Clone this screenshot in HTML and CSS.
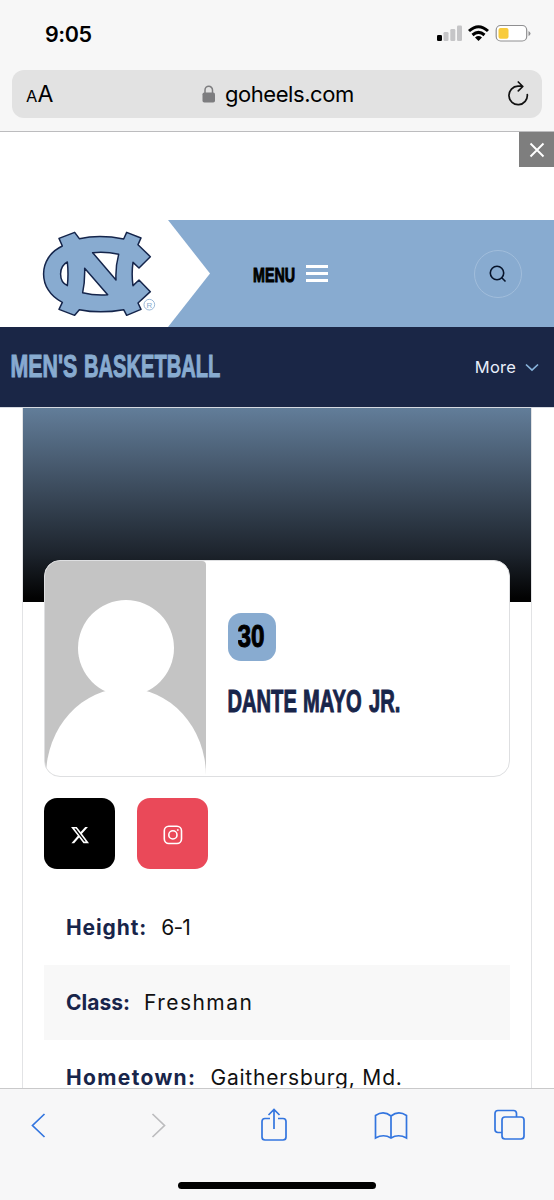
FILE: index.html
```html
<!DOCTYPE html>
<html lang="en">
<head>
<meta charset="utf-8">
<title>Dante Mayo Jr. - Men's Basketball</title>
<link rel="stylesheet" href="styles.css">
</head>
<body>
<div class="phone">
  <header class="browser-top">
    <div class="status">
      <span class="time">9:05</span>
      <svg class="status-icons" width="98" height="24" viewBox="0 0 98 24">
        <rect x="1" y="13" width="5" height="6" rx="1.3" fill="#000"/>
        <rect x="7.5" y="10" width="5" height="9" rx="1.3" fill="#c5c5c7"/>
        <rect x="14.3" y="7" width="5" height="12" rx="1.3" fill="#c5c5c7"/>
        <rect x="21" y="3.5" width="5" height="15.500" rx="1.3" fill="#c5c5c7"/>
        <g fill="none" stroke="#000" stroke-width="3"><path d="M33 9Q42.500.5 52 9"/><path d="M36.500 13Q42.500 7.800 48.500 13"/></g>
        <path d="M39 15.500Q42.500 12.700 46 15.500L42.500 19Z"/>
        <rect x="60.200" y="3.500" width="30.500" height="15.500" rx="4.500" fill="#fff" stroke="#8f8f91" stroke-width="1.200"/>
        <rect x="62.500" y="6" width="10" height="10.700" rx="2" fill="#f8cb3c"/>
        <path d="M92.500 9v5q2-1 2-2.500T92.500 9Z" fill="#8f8f91"/>
      </svg>
    </div>
    <div class="address">
      <span class="text-size"><small>A</small>A</span>
      <span class="domain">
        <svg width="14" height="18" viewBox="0 0 14 18"><rect x=".5" y="7.500" width="12.500" height="10" rx="1.800" fill="#7d7d7f"/><path d="M3 8V5a3.750 3.750 0 0 1 7.500 0v3" fill="none" stroke="#7d7d7f" stroke-width="1.500"/></svg>
        <span class="domain-name">goheels.com</span>
      </span>
      <svg class="reload" width="24" height="26" viewBox="0 0 24 26" fill="none" stroke="#111" stroke-width="1.700" stroke-linecap="round" stroke-linejoin="round"><path d="M21.300 13.500A9.200 9.200 0 1 1 12 5.200h4.500M12.300 1l4.500 4.500-4.500 4.300"/></svg>
    </div>
  </header>

  <main class="page">
    <div class="ad-space"><button class="close"><svg width="16" height="16" viewBox="0 0 16 16"><path d="M1.500 1.500l13 13M14.500 1.500l-13 13" stroke="#fff" stroke-width="1.900"/></svg></button></div>
    <nav class="site-nav">
      <div class="brand">
        <svg width="210" height="107" viewBox="-90 15 630 321">
          <path fill="#88abd0" fill-rule="evenodd" stroke="#15254b" stroke-width="4.500" stroke-linejoin="round" d="M87 70L134 52L148 71Q210 58 281 72L290 52L333 69L324 89L361 125L327 159L309 142Q304 177 309 212L327 195L361 230L324 264L333 283L290 301L281 284Q210 297 148 284L134 301L87 283L97 262C22 225 22 128 97 93ZM112 141C85 155 85 200 112 212Q116 177 112 141ZM188 113Q228 109 266 118Q256 155 258 195ZM164 160L233 239Q195 242 158 233Q165 200 164 160Z"/>
          <circle cx="358" cy="269" r="16" fill="none" stroke="#88abd0" stroke-width="2.500"/>
          <text class="registered" x="349.500" y="277.500">R</text>
        </svg>
      </div>
      <div class="menu">
        <svg width="46" height="28" viewBox="0 0 46 28"><text class="condensed menu-label" transform="translate(0 22) scale(.68 1)">MENU</text></svg>
        <span class="bars"><i></i><i></i><i></i></span>
      </div>
      <button class="search"><svg width="18" height="18" viewBox="0 0 18 18" fill="none" stroke="#07142b" stroke-width="1.600"><circle cx="8" cy="8" r="6.700"/><path d="M12.500 12.500L16.500 16.500"/></svg></button>
    </nav>
    <div class="sport-bar">
      <svg width="214" height="40" viewBox="0 0 214 40"><g class="condensed sport-title"><text transform="translate(-.5 31) scale(.69 1)">MEN'S</text><text transform="translate(73 31) scale(.649 1)">BASKETBALL</text></g></svg>
      <span class="more">More <svg width="14" height="9" viewBox="0 0 14 9"><path d="M1 1.500L7 7.200L13 1.500" fill="none" stroke="#88b4dc" stroke-width="1.700"/></svg></span>
    </div>
    <article class="profile">
      <div class="hero"></div>
      <section class="card">
        <svg class="avatar" width="161" height="215" viewBox="0 0 161 215"><rect width="161" height="215" rx="4" fill="#c4c4c4"/><circle cx="81" cy="87" r="48" fill="#fff"/><ellipse cx="81" cy="215" rx="80" ry="88" fill="#fff"/></svg>
        <div class="identity">
          <div class="number"><svg width="34" height="40" viewBox="0 0 34 40"><text class="condensed" transform="translate(-.5 31) scale(.783 1)">30</text></svg></div>
          <svg width="184" height="40" viewBox="0 0 184 40"><g class="condensed player-name"><text transform="translate(-.5 31) scale(.65 1)">DANTE</text><text transform="translate(75 31) scale(.65 1)">MAYO</text><text transform="translate(141 31) scale(.65 1)">JR.</text></g></svg>
        </div>
      </section>
      <div class="socials">
        <a class="social x"><svg width="20" height="20" viewBox="0 0 24 24"><path fill="#fff" d="M18.240 2.250h3.310l-7.230 8.260 8.500 11.240H16.170l-5.210-6.820L4.990 21.750H1.680l7.730-8.840L1.250 2.250h6.830l4.710 6.230zm-1.160 17.520h1.830L7.080 4.130H5.120z"/></svg></a>
        <a class="social instagram"><svg width="20" height="20" viewBox="0 0 20 20" fill="none" stroke="#fff" stroke-width="1.600"><rect x="1.300" y="1.300" width="17.200" height="17.200" rx="4.500"/><circle cx="9.900" cy="9.900" r="4.100"/><circle cx="14.800" cy="5" r=".6" fill="#fff" stroke-width=".8"/></svg></a>
      </div>
      <dl class="facts">
        <div class="height"><dt>Height:</dt><dd>6-1</dd></div>
        <div class="class-year"><dt>Class:</dt><dd>Freshman</dd></div>
        <div class="hometown"><dt>Hometown:</dt><dd>Gaithersburg, Md.</dd></div>
      </dl>
    </article>
  </main>

  <footer class="browser-bottom">
    <div class="tools">
      <svg width="36" height="36" viewBox="0 0 36 36"><path d="M24.500 7L12.500 18.500L24.500 30"/></svg>
      <svg class="disabled" width="36" height="36" viewBox="0 0 36 36"><path d="M14.500 7L26.500 18.500L14.500 30"/></svg>
      <svg width="36" height="36" viewBox="0 0 36 36"><path d="M14 11.500H9Q6 11.500 6 14.500V30Q6 33 9 33H27Q30 33 30 30V14.500Q30 11.500 27 11.500H22M18 22V2.500M12.500 8L18 2.500L23.500 8"/></svg>
      <svg width="36" height="36" viewBox="0 0 36 36"><path d="M18 9Q10.500 3 2.500 8.500V31Q10.500 26.500 18 31Q25.500 26.500 33.500 31V8.500Q25.500 3 18 9V31"/></svg>
      <svg width="36" height="36" viewBox="0 0 36 36"><path d="M11 25.500H7Q4 25.500 4 22.500V6.500Q4 3.500 7 3.500H22.500Q25.500 3.500 25.500 6.500V10"/><rect x="11" y="10" width="22" height="22" rx="3"/></svg>
    </div>
    <div class="home-indicator"></div>
  </footer>
</div>
</body>
</html>
```
FILE: styles.css
```css
* { box-sizing: border-box; }
body { margin: 0; background: #fff; font-family: Inter, "Liberation Sans", sans-serif; }
svg { display: block; flex: none; }
button { border: 0; padding: 0; }
.phone { width: 554px; height: 1200px; display: flex; flex-direction: column; overflow: hidden; }
.browser-top { height: 132px; flex: none; background: #f7f7f7; border-bottom: 1px solid #bcbcbe; padding: 0 12px; }
.status { height: 70px; display: flex; justify-content: space-between; padding: 22px 8px 0 33px; }
.time { font-size: 21.500px; line-height: 24px; font-weight: 600; letter-spacing: -.4px; }
.address { height: 48px; background: #e2e2e2; border-radius: 12px; display: flex; align-items: center; padding: 0 12px 0 14px; }
.text-size { width: 176px; font-size: 23px; line-height: 30px; padding-top: 2px; }
.text-size small { font-size: 16.500px; }
.domain { display: flex; align-items: center; gap: 9px; font-size: 22px; letter-spacing: -.45px; }
.domain-name { white-space: nowrap; line-height: 28px; }
.reload { margin-left: auto; }
.page { flex: 1; min-height: 0; overflow: hidden; }
.ad-space { height: 88px; display: flex; justify-content: flex-end; }
.close { width: 35px; height: 35px; background: #7e7e7e; display: flex; align-items: center; justify-content: center; }
.site-nav { height: 107px; background: #88abd0; display: flex; align-items: center; }
.brand { width: 210px; height: 107px; background: #fff; clip-path: polygon(0 0, 168px 0, 100% 50%, 168px 100%, 0 100%); }
.registered { font: 24px "Liberation Sans", sans-serif; fill: #88abd0; }
.condensed { font-family: "Liberation Sans", sans-serif; font-weight: 700; font-size: 31px; fill: #000; stroke: #000; stroke-width: 1px; }
.menu-label { font-size: 21px; }
.sport-title { fill: #88abd0; stroke: #88abd0; }
.player-name { fill: #18254a; stroke: #18254a; }
.menu { display: flex; align-items: center; gap: 7px; margin-left: 43px; }
.bars { width: 22px; display: grid; gap: 4px; }
.bars i { height: 2.700px; background: #fff; }
.search { width: 48px; height: 48px; margin: 0 32px 0 auto; border: 1px solid #a1bddb; border-radius: 50%; background: transparent; display: flex; align-items: center; justify-content: center; }
.sport-bar { height: 81px; background: #1a2646; border-bottom: 1px solid #d5d9e1; padding: 0 15px 2px 11px; display: flex; align-items: center; justify-content: space-between; }
.more { color: #e8eefb; font-size: 16.500px; display: flex; align-items: center; gap: 9px; padding-top: 2px; letter-spacing: .2px; }
.profile { width: 510px; height: 800px; margin: 0 auto; border: 1px solid #e2e3e5; border-top: 0; padding: 0 21px; }
.hero { height: 194px; margin: 0 -21px; background: linear-gradient(#627d99, #425366 35%, #1d242d 75%, #020202 98%); }
.card { width: 466px; height: 217px; margin-top: -42px; position: relative; border: 1px solid #dedfe1; border-radius: 16px; background: #fff; overflow: hidden; display: flex; }
.identity { padding: 52px 0 0 22px; }
.number { width: 48px; height: 48px; margin-bottom: 20px; padding: 3px 0 0 10px; border-radius: 13px; background: #88abd0; }
.socials { display: flex; gap: 21.500px; margin-top: 21px; }
.social { width: 71px; height: 71px; border-radius: 13px; display: flex; align-items: center; justify-content: center; padding: 2px 0 0 1px; }
.x { background: #000; }
.instagram { background: #ea4959; }
.facts { margin: 21px 0 0; width: 466px; font-size: 21px; line-height: 28px; }
.facts div { height: 75px; display: flex; align-items: center; gap: 14px; padding: 0 22px; white-space: nowrap; }
.facts .class-year { background: #f8f8f8; }
.facts dt { color: #18254a; font-weight: 700; }
.facts dd { margin: 0; font-weight: 400; color: #111; }
.height dt { letter-spacing: .9px; }
.height dd { letter-spacing: -.8px; }
.class-year dd { letter-spacing: 1.450px; }
.hometown dt { letter-spacing: 1.350px; }
.hometown dd { letter-spacing: .8px; }
.browser-bottom { height: 112px; flex: none; background: #f7f7f8; border-top: 1px solid #c9c9ca; }
.tools { height: 93px; padding: 18px 27px 0 20px; display: flex; justify-content: space-between; fill: none; stroke: #3375df; stroke-width: 1.700; }
.disabled { stroke: #bcbcbe; }
.home-indicator { width: 198px; height: 7px; margin: 0 auto; border-radius: 4px; background: #000; }
```
